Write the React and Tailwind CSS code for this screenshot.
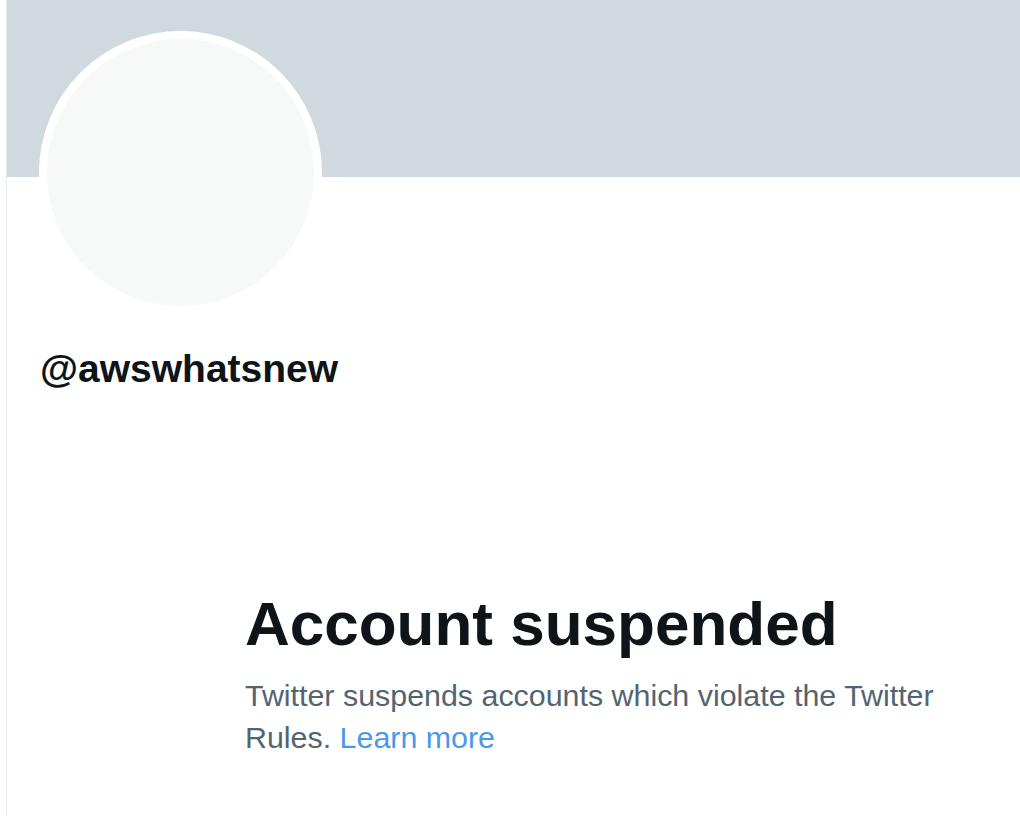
import React from 'react';

const App = () => {
  return (
    <div className="w-[1020px] h-[816px] bg-white overflow-hidden" style={{ fontFamily: '"Liberation Sans", Arial, sans-serif' }}>
      <div className="ml-[6px] h-full border-l border-[#e7ecee] relative">
        {/* Banner */}
        <div className="h-[177px] bg-[#cfd9de]" />

        {/* Avatar */}
        <div className="absolute top-[31px] left-[32px] w-[283px] h-[283px] rounded-full bg-[#f7f9f9] border-[8px] border-white" />

        {/* Handle */}
        <div className="mt-[169px] pl-[33px]">
          <p className="text-[39px] leading-[46px] font-bold text-[#0f1419]">@awswhatsnew</p>
        </div>

        {/* Suspended notice */}
        <div className="mt-[194px] pl-[238px]">
          <h1 className="text-[62px] leading-[76px] font-bold text-[#0f1419]">Account suspended</h1>
          <p className="mt-[12px] max-w-[720px] text-[30.4px] leading-[42px] text-[#536471]">
            <span>Twitter suspends accounts which violate the Twitter</span>{' '}
            <span>Rules.</span>{' '}
            <a href="#" className="text-[#4a99e9]">Learn more</a>
          </p>
        </div>
      </div>
    </div>
  );
};

export default App;
